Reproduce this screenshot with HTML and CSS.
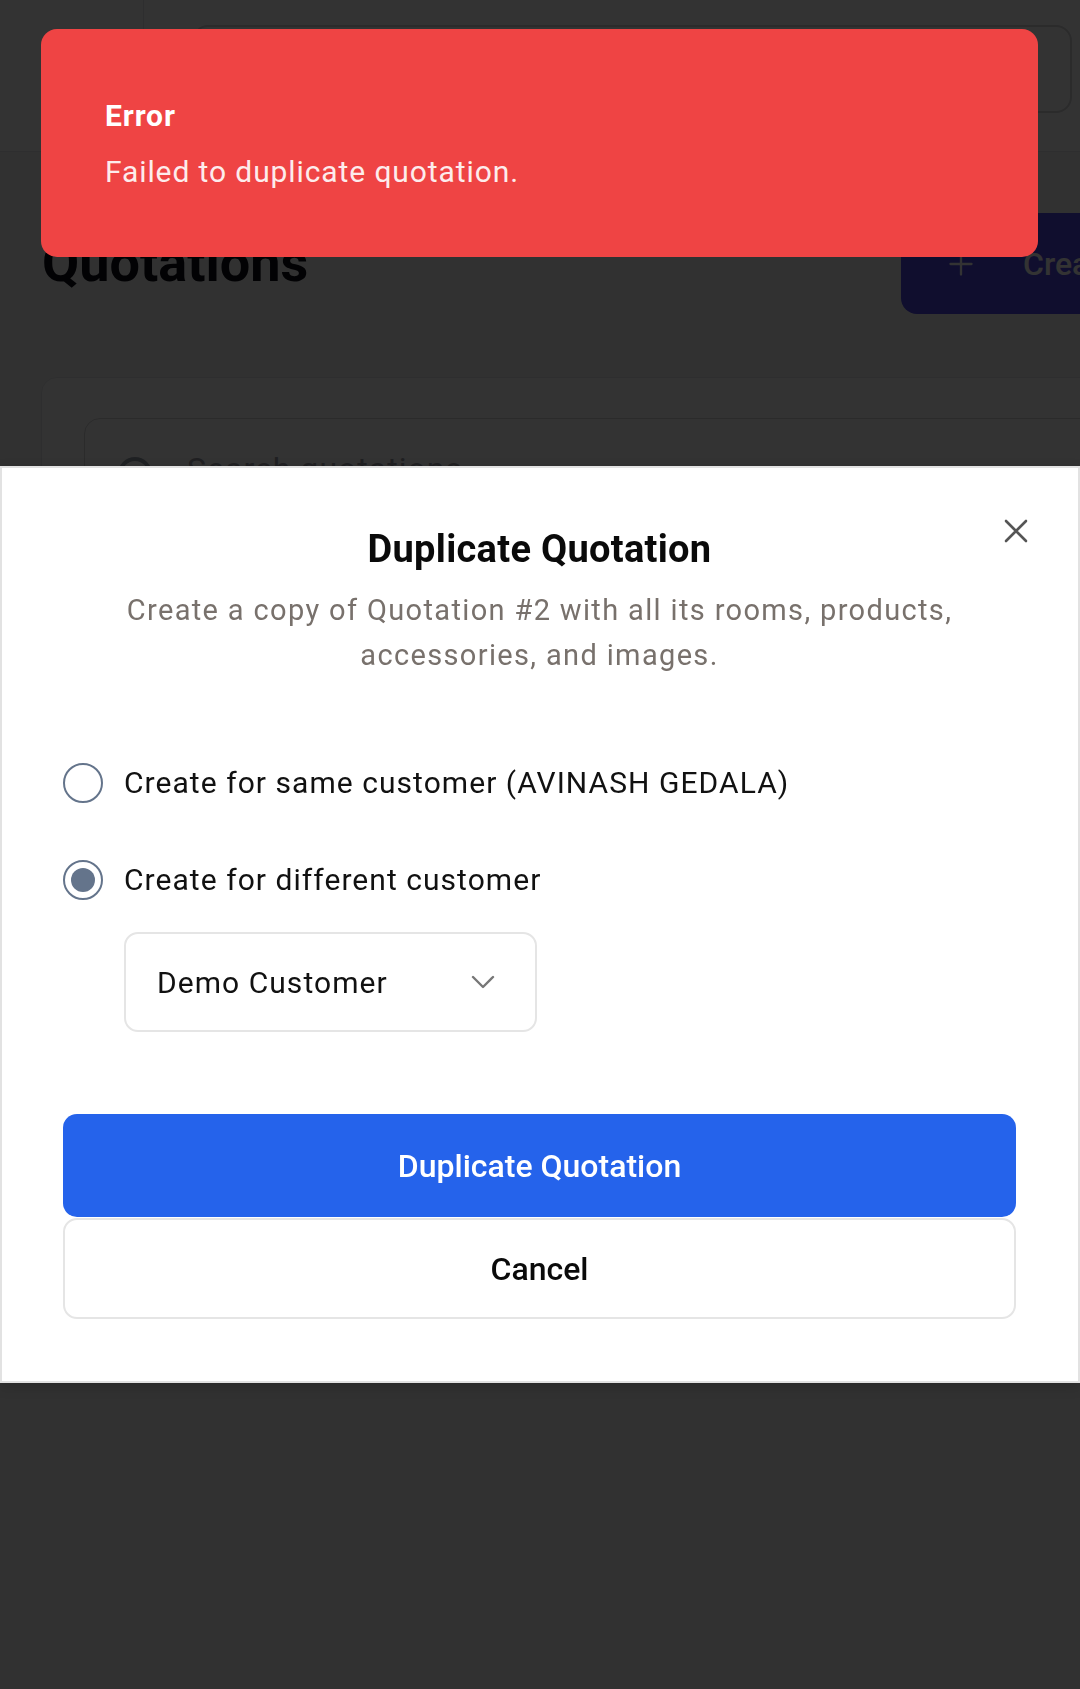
FILE: index.html
```html
<!DOCTYPE html>
<html lang="en">
<head>
<meta charset="utf-8">
<title>Quotations</title>
<link rel="stylesheet" href="styles.css">
</head>
<body>
<div class="page">
  <header class="topbar">
    <div class="menu-cell"></div>
    <div class="top-search"></div>
  </header>
  <main class="main">
    <div class="title-row">
      <h1 class="page-title">Quotations</h1>
      <button class="create-btn" type="button">
        <svg class="plus" viewBox="0 0 24 24" width="28" height="28"><path d="M12 3v18M3 12h18" fill="none" stroke="currentColor" stroke-width="2" stroke-linecap="round"/></svg>
        <span class="create-label">Create Quotation</span>
      </button>
    </div>
    <section class="list-card">
      <div class="search-field">
        <svg class="search-icon" viewBox="0 0 40 40" width="40" height="40"><circle cx="18" cy="18" r="15" fill="none" stroke="currentColor" stroke-width="4"/><path d="M29 29l8 8" stroke="currentColor" stroke-width="4" stroke-linecap="round"/></svg>
        <span class="search-placeholder">Search quotations</span>
      </div>
    </section>
  </main>
</div>

<div class="overlay"></div>

<div class="toast" role="alert">
  <div class="toast-title">Error</div>
  <div class="toast-desc">Failed to duplicate quotation.</div>
</div>

<div class="modal" role="dialog">
  <button class="close-btn" type="button" aria-label="Close">
    <svg viewBox="0 0 24 24" width="24" height="24"><path d="M2 2L22 22M22 2L2 22" fill="none" stroke="currentColor" stroke-width="2.6" stroke-linecap="round"/></svg>
  </button>
  <h2 class="modal-title">Duplicate Quotation</h2>
  <p class="modal-desc">Create a copy of Quotation #2 with all its rooms, products, accessories, and images.</p>

  <div class="options">
    <label class="option">
      <span class="radio"></span>
      <span class="option-text">Create for same customer (AVINASH GEDALA)</span>
    </label>
    <label class="option option-second">
      <span class="radio radio-checked"><span class="radio-dot"></span></span>
      <span class="option-text">Create for different customer</span>
    </label>
    <div class="select">
      <span class="select-value">Demo Customer</span>
      <svg class="chevron" viewBox="0 0 24 14" width="24" height="14"><path d="M2 2l10 10L22 2" fill="none" stroke="currentColor" stroke-width="2.4" stroke-linecap="round" stroke-linejoin="round"/></svg>
    </div>
  </div>

  <div class="actions">
    <button class="btn btn-primary" type="button">Duplicate Quotation</button>
    <button class="btn btn-outline" type="button">Cancel</button>
  </div>
</div>
</body>
</html>
```

FILE: styles.css
```css
* { box-sizing: border-box; }

html, body {
  margin: 0;
  padding: 0;
}

body {
  width: 1080px;
  height: 1689px;
  overflow: hidden;
  background: #f5f5f5;
  font-family: Roboto, "Noto Sans", "Liberation Sans", sans-serif;
  color: #111;
}

/* ---------- underlying page ---------- */
.page {
  width: 1080px;
}

.topbar {
  height: 152px;
  background: #ffffff;
  border-bottom: 1px solid #e5e7eb;
  display: flex;
}

.menu-cell {
  width: 144px;
  border-right: 1px solid #e5e7eb;
}

.top-search {
  margin: 25px 0 0 48px;
  width: 880px;
  height: 88px;
  border: 2px solid #d4d4d8;
  border-radius: 16px;
}

.main {
  width: 1180px;
  padding: 61px 42px 0 42px;
}

.title-row {
  display: flex;
  align-items: center;
  justify-content: space-between;
}

.page-title {
  margin: 0;
  font-size: 54px;
  line-height: 1.2;
  font-weight: 700;
  color: #0a0a14;
}

.create-btn {
  flex: none;
  width: 237px;
  height: 101px;
  border: 0;
  border-radius: 16px;
  background: #4f46e5;
  color: #ffffff;
  font-family: inherit;
  font-size: 32px;
  font-weight: 500;
  display: flex;
  align-items: center;
  gap: 48px;
  padding: 0 0 0 46px;
  white-space: nowrap;
  overflow: hidden;
}

.plus,
.create-label {
  flex: none;
}

.list-card {
  margin-top: 63px;
  margin-left: -1px;
  height: 600px;
  background: #ffffff;
  border: 1px solid #e5e7eb;
  border-radius: 16px;
  padding: 40px 0 0 42px;
}

.search-field {
  height: 92px;
  border: 1px solid #d4d4d8;
  border-radius: 16px;
  display: flex;
  align-items: center;
  padding-left: 32px;
  gap: 30px;
  color: #9ca3af;
}

.search-icon {
  flex: none;
  margin-top: 24px;
}

.search-placeholder {
  font-size: 32px;
  letter-spacing: 1px;
  color: #a1a1aa;
  margin-top: 10px;
}

/* ---------- overlay ---------- */
.overlay {
  position: fixed;
  inset: 0;
  background: rgba(0, 0, 0, 0.8);
}

/* ---------- toast ---------- */
.toast {
  position: fixed;
  top: 29px;
  left: 41px;
  width: 997px;
  height: 228px;
  background: #ef4444;
  border-radius: 16px;
  padding: 67px 64px 0 64px;
  color: #ffffff;
}

.toast-title {
  font-size: 30px;
  line-height: 40px;
  font-weight: 700;
  letter-spacing: 0.9px;
}

.toast-desc {
  margin-top: 14px;
  font-size: 30px;
  line-height: 44px;
  letter-spacing: 0.9px;
  opacity: 0.9;
}

/* ---------- modal ---------- */
.modal {
  position: fixed;
  top: 466px;
  left: 0;
  width: 1080px;
  background: #ffffff;
  border: 2px solid #e2e2e2;
  box-shadow: 0 4px 12px rgba(0, 0, 0, 0.15);
  padding: 58px 62px 62px 61px;
}

.close-btn {
  position: absolute;
  top: 51px;
  right: 50px;
  width: 24px;
  height: 24px;
  padding: 0;
  border: 0;
  background: transparent;
  color: #555555;
  display: block;
}

.close-btn svg { display: block; }

.modal-title {
  margin: 0;
  text-align: center;
  font-size: 38px;
  line-height: 46px;
  font-weight: 700;
  color: #0a0a0a;
  letter-spacing: 0.3px;
}

.modal-desc {
  margin: 16px 0 0 0;
  text-align: center;
  font-size: 29px;
  line-height: 45px;
  letter-spacing: 1.35px;
  color: #78716c;
}

.options {
  margin-top: 82px;
}

.option {
  display: flex;
  align-items: center;
  gap: 21px;
  height: 45px;
}

.option-second {
  margin-top: 52px;
}

.radio {
  flex: none;
  width: 40px;
  height: 40px;
  border: 2px solid #64748b;
  border-radius: 50%;
  display: flex;
  align-items: center;
  justify-content: center;
}

.radio-dot {
  width: 24px;
  height: 24px;
  border-radius: 50%;
  background: #64748b;
}

.option-text {
  font-size: 30px;
  line-height: 45px;
  letter-spacing: 1.05px;
  color: #111111;
}

.select {
  margin: 30px 0 0 61px;
  width: 413px;
  height: 100px;
  border: 2px solid #e5e5e5;
  border-radius: 14px;
  display: flex;
  align-items: center;
  justify-content: space-between;
  padding: 0 40px 0 31px;
}

.select-value {
  font-size: 30px;
  letter-spacing: 1.05px;
  color: #111111;
}

.chevron {
  color: #777777;
  display: block;
}

.actions {
  margin-top: 82px;
  display: flex;
  flex-direction: column;
  gap: 1px;
}

.btn {
  width: 100%;
  border-radius: 14px;
  font-family: inherit;
  font-size: 32px;
  font-weight: 500;
  cursor: pointer;
}

.btn-primary {
  height: 103px;
  border: 0;
  background: #2563eb;
  color: #ffffff;
}

.btn-outline {
  height: 101px;
  border: 2px solid #e5e5e5;
  background: #ffffff;
  color: #0a0a0a;
}
```
